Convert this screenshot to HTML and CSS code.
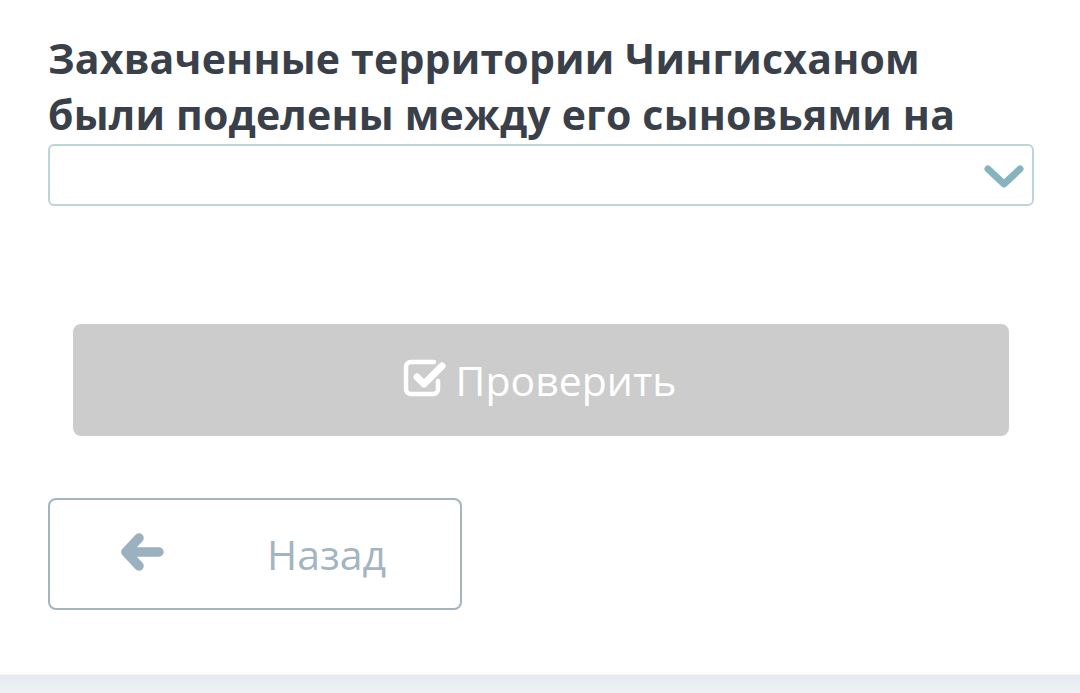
FILE: index.html
```html
<!DOCTYPE html>
<html lang="ru">
<head>
<meta charset="utf-8">
<link rel="stylesheet" href="styles.css">
</head>
<body>
<main class="card">
  <h1 class="question">Захваченные территории Чингисханом были поделены между его сыновьями на</h1>
  <div class="select">
    <svg class="chevron" width="40" height="26" viewBox="0 0 40 26"><path d="M4 5 L20 20 L36 5" fill="none" stroke="#86b4be" stroke-width="7" stroke-linecap="round" stroke-linejoin="round"/></svg>
  </div>
  <div class="check-wrap">
    <button class="check">
      <svg class="check-icon" width="48" height="40" viewBox="0 0 48 40"><path d="M32 4 H9 a5 5 0 0 0 -5 5 V31 a5 5 0 0 0 5 5 H31 a5 5 0 0 0 5 -5 V23" fill="none" stroke="#fff" stroke-width="4.5" stroke-linecap="round"/><path d="M15 19 L22 26 L40 8" fill="none" stroke="#fff" stroke-width="7" stroke-linecap="round" stroke-linejoin="round"/></svg>
      <span>Проверить</span>
    </button>
  </div>
  <button class="back">
    <svg class="arrow" width="44" height="38" viewBox="0 0 44 38"><path d="M18 5 L5 19 L18 33 M6 19 L38 19" fill="none" stroke="#9cb1c0" stroke-width="9.5" stroke-linecap="round" stroke-linejoin="round"/></svg>
    <span>Назад</span>
  </button>
</main>
<div class="footer"></div>
</body>
</html>
```
FILE: styles.css
```css
html, body { margin: 0; padding: 0; }
body {
  width: 1080px;
  height: 693px;
  background: #fff;
  font-family: "Open Sans", "Noto Sans", sans-serif;
  overflow: hidden;
  display: flex;
  flex-direction: column;
}
.card {
  flex: 1;
  padding: 30px 46px 0 48px;
  display: flex;
  flex-direction: column;
}
.question {
  margin: 0;
  max-width: 930px;
  font-size: 41px;
  font-weight: 700;
  line-height: 56px;
  color: #3a4049;
  letter-spacing: 0.2px;
}
.select {
  margin-top: 2px;
  height: 58px;
  border: 2px solid #bcd5d9;
  border-radius: 6px;
  display: flex;
  align-items: center;
  justify-content: flex-end;
  padding-right: 8px;
}
.chevron { display: block; margin-top: 4px; }
.check-wrap {
  padding: 118px 25px 0 25px;
}
.check {
  width: 100%;
  height: 112px;
  border: none;
  border-radius: 8px;
  background: #cccccc;
  color: #fff;
  font-family: inherit;
  font-size: 41px;
  display: flex;
  align-items: center;
  justify-content: center;
  gap: 6px;
  padding: 0 4px 0 0;
}
.check-icon { display: block; margin-bottom: 4px; }
.back {
  margin-top: 62px;
  width: 414px;
  height: 112px;
  border: 2px solid #a3b6bf;
  border-radius: 8px;
  background: #fff;
  color: #a3b5c0;
  font-family: inherit;
  font-size: 41px;
  display: flex;
  align-items: center;
  padding: 0 0 0 71px;
  gap: 102px;
}
.arrow { display: block; margin-bottom: 4px; }
.footer {
  height: 18px;
  background: linear-gradient(#e6e9ef, #eef1f5);
  box-shadow: 0 -1px 2px rgba(0,0,0,0.06);
}
```
